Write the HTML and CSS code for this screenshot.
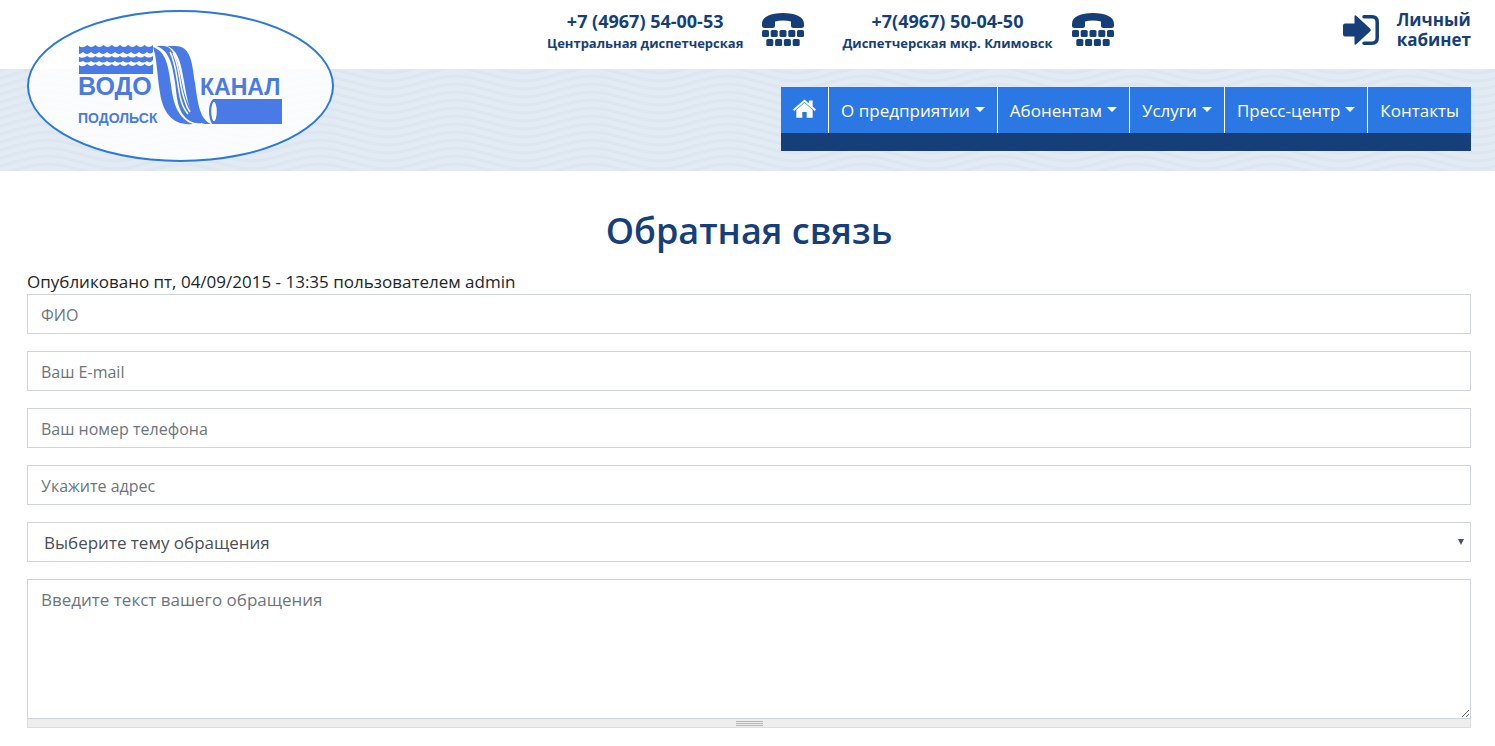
FILE: index.html
```html
<!DOCTYPE html>
<html lang="ru">
<head>
<meta charset="utf-8">
<meta name="viewport" content="width=device-width, initial-scale=1">
<title>Обратная связь</title>
<link rel="stylesheet" href="styles.css">
</head>
<body>
<svg class="sprite" aria-hidden="true">
  <symbol id="tty" viewBox="0 0 42 34">
    <path d="M0 11C0 3.500 9 0 21 0S42 3.500 42 11V12.500Q42 15 39.500 15H31.500Q29 15 29 12.500V8.500Q21 6.700 13 8.500V12.500Q13 15 10.500 15H2.500Q0 15 0 12.500Z"/>
    <rect x="0" y="17" width="7" height="7" rx="1.500"/><rect x="8.700" y="17" width="7" height="7" rx="1.500"/><rect x="17.500" y="17" width="7" height="7" rx="1.500"/><rect x="26.300" y="17" width="7" height="7" rx="1.500"/><rect x="35" y="17" width="7" height="7" rx="1.500"/>
    <rect x="4.300" y="26" width="7" height="7" rx="1.500"/><rect x="13.100" y="26" width="7" height="7" rx="1.500"/><rect x="21.900" y="26" width="7" height="7" rx="1.500"/><rect x="30.700" y="26" width="7" height="7" rx="1.500"/>
  </symbol>
</svg>
<header class="header">
  <div class="topbar">
    <div class="phones">
      <div class="phone">
        <div class="phone-text"><strong class="phone-number">+7 (4967) 54-00-53</strong><span class="phone-name">Центральная диспетчерская</span></div>
        <svg class="tty" aria-hidden="true"><use href="#tty"/></svg>
      </div>
      <div class="phone">
        <div class="phone-text"><strong class="phone-number">+7(4967) 50-04-50</strong><span class="phone-name">Диспетчерская мкр. Климовск</span></div>
        <svg class="tty" aria-hidden="true"><use href="#tty"/></svg>
      </div>
    </div>
    <a class="account" href="#">
      <svg class="sign-in" viewBox="0 0 36 30" aria-hidden="true"><path d="M2 8.500H11.500V1.500Q11.500-.8 13.500 1L27 13.500Q28.500 15 27 16.500L13.500 29Q11.500 30.800 11.500 28.500V21.500H2Q0 21.500 0 19.500V10.500Q0 8.500 2 8.500Z"/><path class="bracket" d="M21 1.800H29Q34.200 1.800 34.200 7V23Q34.200 28.200 29 28.200H21"/></svg>
      <span>Личный<br>кабинет</span>
    </a>
  </div>
  <div class="band">
    <nav class="nav">
      <a class="nav-item" href="#" aria-label="Главная"><svg class="home" viewBox="0 0 24 20" aria-hidden="true"><path d="M12 0 16.500 4V1H20.500V7.500L24 10.500 22.800 12 12 2.600 1.200 12 0 10.500Z"/><path d="M12 3.600 20.500 11V19H14.300V13H9.700V19H3.500V11Z"/></svg></a>
      <a class="nav-item has-menu" href="#">О предприятии</a>
      <a class="nav-item has-menu" href="#">Абонентам</a>
      <a class="nav-item has-menu" href="#">Услуги</a>
      <a class="nav-item has-menu" href="#">Пресс-центр</a>
      <a class="nav-item" href="#">Контакты</a>
    </nav>
  </div>
  <a class="logo" href="#" aria-label="Водоканал Подольск">
    <svg class="logo-art" viewBox="0 0 204 82">
      <path d="M0 1Q4 4 8.200 0 12.300 4 16.400 0 20.500 4 24.600 0 28.700 4 32.800 0 36.900 4 41 0 45.100 4 49.200 0 53.300 4 57.400 0 61.500 4 65.600 0 69.700 4 74 0V7Q71 10 68 7 64 11 60 7 56 11 52 7 48 11 44 7 40 11 36 7 32 11 28 7 24 11 20 7 16 11 12 7 8 11 4 7 2 9 0 9Z"/>
      <path d="M0 12Q4 14 8.200 11 12.300 14 16.400 11 20.500 14 24.600 11 28.700 14 32.800 11 36.900 14 41 11 45.100 14 49.200 11 53.300 14 57.400 11 61.500 14 65.600 11 69.700 14 74 11V15Q71 19 68 16 64 19 60 16 56 19 52 16 48 19 44 16 40 19 36 16 32 19 28 16 24 19 20 16 16 19 12 16 8 19 4 16 2 17 0 17Z"/>
      <path d="M0 20Q4 23 8.200 19 12.300 23 16.400 19 20.500 23 24.600 19 28.700 23 32.800 19 36.900 23 41 19 45.100 23 49.200 19 53.300 23 57.400 19 61.500 23 65.600 19 69.700 23 74 19V29H0Z"/>
      <path d="M74 2C78 13 78 30 81 48 84 68 94 81 114 79C99 74 94 58 92 40 89 19 87 7 74 2Z"/>
      <path d="M77 1Q84 0 89 2C101 10 101 38 108 56Q112 68 123 78Q116 79 111 76C98 68 98 52 96 37 93 18 90 5 77 1Z"/>
      <path d="M88 1H96C113 1 113 20 116 38 119 60 121 74 132 79H126C111 76 108 54 105 36 102 18 99 5 88 1Z"/>
      <path class="water-line" d="M91 7C98 19 98 41 102 55Q104 63 109 69M94 8C101 21 100 41 106 56Q108 63 111 67"/>
      <path d="M134 54H203V79H133Q130 74 130 66T134 54Z"/>
      <ellipse class="pipe-end" cx="135" cy="66.500" rx="3.500" ry="10.500"/>
      <text class="logo-big logo-left" x="-1" y="50">ВОДО</text>
      <text class="logo-big" x="121" y="50">КАНАЛ</text>
      <text class="logo-small" x="-1" y="78">ПОДОЛЬСК</text>
    </svg>
  </a>
</header>
<main class="content">
  <h1 class="title">Обратная связь</h1>
  <p class="published">Опубликовано пт, 04/09/2015 - 13:35 пользователем admin</p>
  <form class="form">
    <input class="control" type="text" placeholder="ФИО" aria-label="ФИО">
    <input class="control" type="email" placeholder="Ваш E-mail" aria-label="Ваш E-mail">
    <input class="control" type="tel" placeholder="Ваш номер телефона" aria-label="Ваш номер телефона">
    <input class="control" type="text" placeholder="Укажите адрес" aria-label="Укажите адрес">
    <select class="control select" aria-label="Тема обращения"><option>Выберите тему обращения</option></select>
    <div class="message">
      <textarea class="control textarea" placeholder="Введите текст вашего обращения" aria-label="Текст обращения"></textarea>
      <div class="grip"><span class="grip-lines"></span></div>
    </div>
  </form>
</main>
</body>
</html>
```
FILE: styles.css
```css
* {
  box-sizing: border-box;
}

body {
  margin: 0;
  font-family: "Open Sans", "Noto Sans", sans-serif;
  font-size: 17px;
  line-height: 24px;
  color: #212529;
  background: #fff;
}

a {
  color: inherit;
  text-decoration: none;
}

.sprite {
  position: absolute;
  width: 0;
  height: 0;
}

.header {
  position: relative;
}

.topbar {
  display: flex;
  justify-content: space-between;
  align-items: flex-start;
  min-height: 69px;
  padding: 10px 24px 0 547px;
  color: #163f7a;
  fill: #163f7a;
}

.phones {
  display: flex;
  gap: 38px;
}

.phone {
  display: flex;
  gap: 19px;
}

.phone-text {
  display: flex;
  flex-direction: column;
  align-items: center;
  white-space: nowrap;
}

.phone-number {
  font-size: 18px;
  line-height: 22px;
  font-weight: 700;
}

.phone-name {
  font-size: 13px;
  line-height: 22px;
  font-weight: 700;
}

.tty {
  width: 42px;
  height: 34px;
  margin-top: 3px;
}

.account {
  display: flex;
  gap: 18px;
  font-size: 17px;
  line-height: 20px;
  font-weight: 700;
}

.sign-in {
  width: 36px;
  height: 30px;
  margin-top: 5px;
}

.bracket {
  fill: none;
  stroke: #163f7a;
  stroke-width: 3.5;
  stroke-linecap: round;
}

.band {
  display: flex;
  justify-content: flex-end;
  padding: 18px 24px 20px;
  background: #e2eaf4 url("data:image/svg+xml,%3Csvg xmlns='http://www.w3.org/2000/svg' width='136' height='8' viewBox='0 0 136 8'%3E%3Cg fill='none' stroke='%23dde5ef' stroke-width='3'%3E%3Cpath id='w' d='M-22 -9C3 -9 21 4 46 4S89 -9 114 -9 157 4 182 4'/%3E%3Cuse href='%23w' y='-8'/%3E%3Cuse href='%23w' y='8'/%3E%3Cuse href='%23w' y='16'/%3E%3C/g%3E%3C/svg%3E") 69px 0;
}

.nav {
  display: flex;
  border-bottom: 18px solid #163f7a;
  background: #2b78e4;
  color: #fff;
}

.nav-item {
  display: flex;
  align-items: center;
  height: 46px;
  padding: 2px 12px 0;
  white-space: nowrap;
}

.nav-item + .nav-item {
  border-left: 1px solid #fff;
}

.has-menu::after {
  content: "";
  margin: 0 0 4px 5px;
  border: 5px solid transparent;
  border-top-color: #fff;
  border-bottom: 0;
}

.home {
  width: 23px;
  height: 20px;
  margin-bottom: 4px;
  fill: #fff;
}

.logo {
  position: absolute;
  top: 10px;
  left: 27px;
  width: 307px;
  height: 152px;
  padding: 33px 50px;
  border: 2px solid #2b78e4;
  border-radius: 50%;
  background: rgba(255, 255, 255, 0.85);
}

.logo-art {
  display: block;
  width: 204px;
  height: 82px;
  fill: #4a7ae6;
  overflow: visible;
}

.water-line {
  fill: none;
  stroke: #fff;
  stroke-width: 1.5;
}

.pipe-end {
  fill: #fff;
  stroke: #4a7ae6;
  stroke-width: 1.5;
}

.logo-big,
.logo-small {
  font-family: "Liberation Sans", Arial, sans-serif;
  font-weight: 700;
}

.logo-big {
  font-size: 23px;
}

.logo-left {
  font-size: 25px;
}

.logo-small {
  font-size: 14px;
}

.content {
  padding: 36px 24px 18px 27px;
}

.title {
  margin: 0 0 15px;
  font-size: 36px;
  line-height: 48px;
  font-weight: 600;
  text-align: center;
  color: #163f7a;
}

.published {
  margin: 0;
}

.form {
  display: flex;
  flex-direction: column;
  gap: 17px;
}

.control {
  display: block;
  width: 100%;
  height: 40px;
  margin: 0;
  padding: 8px 13px 6px;
  border: 1px solid #ced4da;
  border-radius: 0;
  background: #fff;
  color: #495057;
  font: inherit;
  font-size: 16px;
}

.control::placeholder {
  color: #6c757d;
}

.select {
  padding: 8px 16px 6px;
  font-size: 17px;
  appearance: none;
  background: #fff url("data:image/svg+xml,%3Csvg xmlns='http://www.w3.org/2000/svg' width='6' height='6'%3E%3Cpath d='M0 0H6L3 6Z' fill='%23495057'/%3E%3C/svg%3E") no-repeat right 6px top 16px;
}

.textarea {
  height: 140px;
  font-size: 17px;
  resize: vertical;
}

.grip {
  display: flex;
  justify-content: center;
  height: 9px;
  padding-top: 2px;
  border: 1px solid #ddd;
  border-top: 0;
  background: #eee;
}

.grip-lines {
  width: 27px;
  height: 5px;
  background: repeating-linear-gradient(#b5b5b5 0 1px, #eee 1px 2px);
}
```
